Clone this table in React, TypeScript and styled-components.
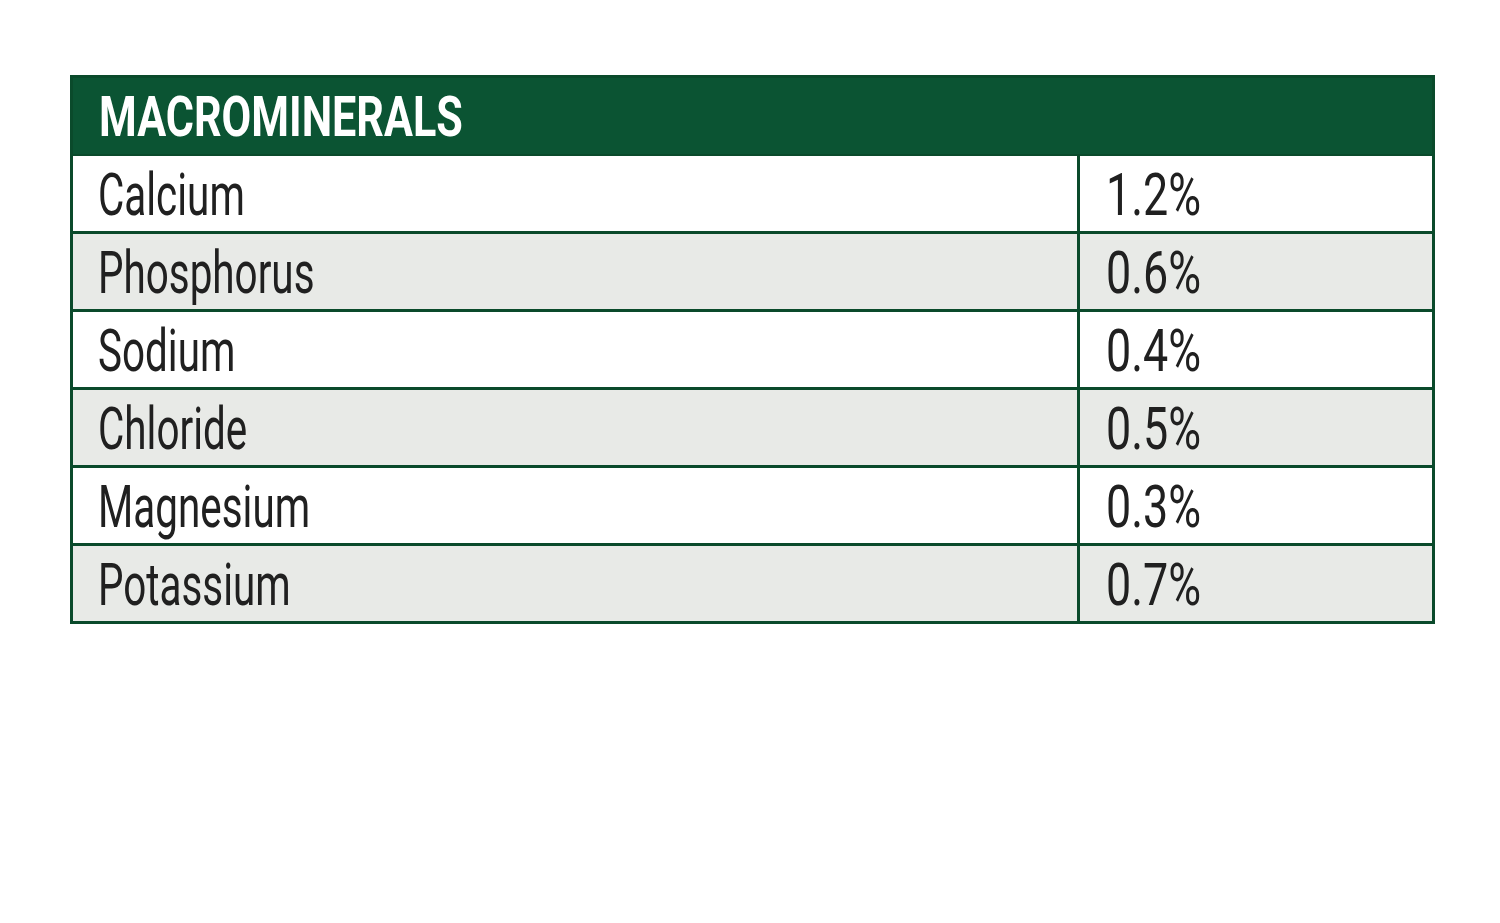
import { Fragment } from "react";
import styled, { createGlobalStyle } from "styled-components";

const GlobalStyle = createGlobalStyle`
  html, body {
    margin: 0;
    padding: 0;
    background: #ffffff;
  }
  body {
    font-family: Roboto, "Liberation Sans", sans-serif;
  }
`;

const Page = styled.main`
  width: 1500px;
  height: 923px;
  padding: 75px 0 0 70px;
  box-sizing: border-box;
`;

const Table = styled.section`
  width: 1365px;
  box-sizing: border-box;
  display: grid;
  grid-template-columns: 1004px 1fr;
  grid-auto-rows: 75px;
  gap: 3px;
  border: 3px solid #0a4a2b;
  background: #0a4a2b;
`;

const Header = styled.div`
  grid-column: 1 / -1;
  height: 76px;
  background: #0b5433;
  display: flex;
  align-items: center;
  padding: 2px 0 0 26px;
  box-sizing: border-box;
`;

const Cell = styled.div<{ $alt: boolean; $pad: number }>`
  background: ${(p) => (p.$alt ? "#e8eae7" : "#ffffff")};
  display: flex;
  align-items: center;
  padding-left: ${(p) => p.$pad}px;
  padding-top: 2px;
  box-sizing: border-box;
  overflow: hidden;
`;

const Squeezed = styled.span<{ $scale: number; $bold?: boolean }>`
  display: inline-block;
  white-space: nowrap;
  transform: scaleX(${(p) => p.$scale});
  transform-origin: left center;
  font-size: ${(p) => (p.$bold ? 56 : 59)}px;
  font-weight: ${(p) => (p.$bold ? 700 : 400)};
  color: ${(p) => (p.$bold ? "#ffffff" : "#202020")};
  line-height: 1;
`;

const minerals = [
  { name: "Calcium", value: "1.2%" },
  { name: "Phosphorus", value: "0.6%" },
  { name: "Sodium", value: "0.4%" },
  { name: "Chloride", value: "0.5%" },
  { name: "Magnesium", value: "0.3%" },
  { name: "Potassium", value: "0.7%" },
];

export default function App() {
  return (
    <>
      <GlobalStyle />
      <Page>
        <Table>
          <Header>
            <Squeezed $scale={0.77} $bold>
              MACROMINERALS
            </Squeezed>
          </Header>
          {minerals.map((m, i) => (
            <Fragment key={m.name}>
              <Cell $alt={i % 2 === 1} $pad={25}>
                <Squeezed $scale={0.685}>{m.name}</Squeezed>
              </Cell>
              <Cell $alt={i % 2 === 1} $pad={26}>
                <Squeezed $scale={0.76}>{m.value}</Squeezed>
              </Cell>
            </Fragment>
          ))}
        </Table>
      </Page>
    </>
  );
}
